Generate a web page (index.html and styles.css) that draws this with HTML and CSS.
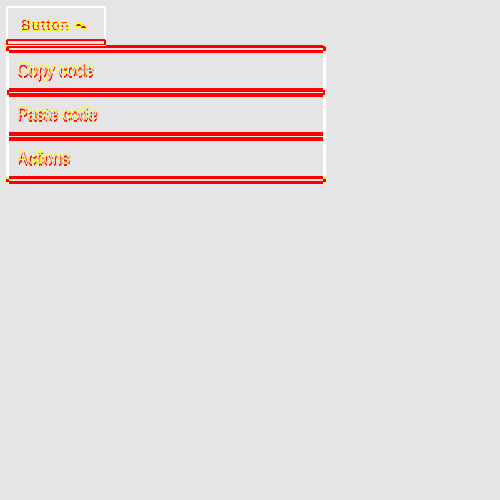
FILE: index.html
```
<!DOCTYPE html>
<html lang="en">
<head>
<meta charset="utf-8">
<title>Button menu</title>
<link rel="stylesheet" href="styles.css">
</head>
<body>
<main class="dropdown">
<button class="toggle"><span class="toggle-label">Button</span><svg class="caret" width="14" height="8" viewBox="0 0 14 8" shape-rendering="crispEdges"><path fill="#ff0" d="M0 4h1V3h1V2h1V1h1V0h3v1h1v1h2v1h1v1h1v1h1v1h1v1H7V6H6V5H0z"/><path fill="#f00" d="M2 4V3h1V2h3v1h1v1zM8 5V4h3v1h1v1H7V5z"/></svg></button>
<ul class="menu">
<li class="item"><span class="label">Copy code</span></li>
<li class="item"><span class="label">Paste code</span></li>
<li class="item"><span class="label">Actions</span></li>
</ul>
</main>
</body>
</html>
```
FILE: styles.css
```
* { box-sizing: border-box; }
body { margin: 0; background: #e5e5e5; font-family: "Liberation Sans", Arial, sans-serif; }
.dropdown { padding: 6px; }
.toggle {
  position: relative; z-index: 1;
  display: flex; align-items: flex-start; width: 100px; height: 40px; margin-bottom: -1px;
  padding: 13px 0 0 15px; border: 0; border-radius: 2px 2px 0 0;
  background:
    linear-gradient(#ff0, #ff0) 0 33px / 1px 1px no-repeat,
    linear-gradient(#ff0, #ff0) 100% 33px / 1px 1px no-repeat,
    linear-gradient(#ff0, #ff0) 100% 39px / 2px 1px no-repeat,
    linear-gradient(#f00, #f00) 0 34px / 2px 4px no-repeat,
    linear-gradient(#f00, #f00) 100% 34px / 2px 4px no-repeat,
    linear-gradient(#f00, #f00) 0 33px / 100% 2px no-repeat,
    linear-gradient(#f00, #f00) 0 38px / 100% 1px no-repeat,
    linear-gradient(#fff, #fff) 0 39px / 100% 1px no-repeat,
    linear-gradient(#fff, #fff) 0 0 / 100% 2px no-repeat,
    linear-gradient(#fff, #fff) 0 0 / 2px 38px no-repeat,
    linear-gradient(#fff, #fff) 100% 0 / 2px 38px no-repeat, #e5e5e5;
}
.toggle-label, .label {
  color: #e5e5e5;
  -webkit-text-stroke: 2px #ff0; paint-order: stroke fill;
  text-shadow: 0 2px #f00, 1px 1px #f00;
  -webkit-mask: conic-gradient(#000 75%, transparent 0) 0 0 / 5px 4px;
  mask: conic-gradient(#000 75%, transparent 0) 0 0 / 5px 4px;
}
.toggle-label {
  flex: none; width: 53px; color: #f00; text-shadow: none;
  font: 14px/12px "Liberation Sans", Arial, sans-serif; letter-spacing: 1.4px; text-align: left;
}
.caret { display: block; flex: none; margin: 3px 0 0; }
.menu {
  width: 320px; height: 139px; margin: 0; padding: 0; list-style: none;
  background: linear-gradient(#fff, #fff) 0 1px / 3px 138px no-repeat,
    linear-gradient(#fff, #fff) 100% 1px / 3px 138px no-repeat;
  display: grid; grid-template-rows: 43px 44px 52px;
}
.item {
  padding: 11px 0 0 11px;
  background: linear-gradient(#f00, #f00) 3px 0 / 314px 4px no-repeat,
    linear-gradient(#f00, #f00) 3px 5px / 314px 4px no-repeat,
    linear-gradient(#f00, #f00) 1px 2px / 2px 5px no-repeat,
    linear-gradient(#f00, #f00) 317px 2px / 2px 5px no-repeat;
}
.item:first-child {
  padding-top: 10px;
  background: linear-gradient(#ff0, #ff0) 0 1px / 1px 1px no-repeat,
    linear-gradient(#ff0, #ff0) 319px 1px / 1px 1px no-repeat,
    linear-gradient(#ff0, #ff0) 0 6px / 1px 1px no-repeat,
    linear-gradient(#ff0, #ff0) 319px 6px / 1px 1px no-repeat,
    linear-gradient(#f00, #f00) 0 1px / 3px 5px no-repeat,
    linear-gradient(#f00, #f00) 317px 1px / 3px 5px no-repeat,
    linear-gradient(#f00, #f00) 3px 0 / 314px 3px no-repeat,
    linear-gradient(#f00, #f00) 3px 5px / 314px 3px no-repeat;
}
.item:last-child {
  background: linear-gradient(#f00, #f00) 3px 0 / 314px 4px no-repeat,
    linear-gradient(#f00, #f00) 3px 5px / 314px 4px no-repeat,
    linear-gradient(#f00, #f00) 3px 44px / 314px 3px no-repeat,
    linear-gradient(#f00, #f00) 3px 49px / 314px 3px no-repeat,
    linear-gradient(#f00, #f00) 0 47px / 3px 3px no-repeat,
    linear-gradient(#f00, #f00) 317px 47px / 3px 3px no-repeat,
    linear-gradient(#ff0, #ff0) 0 45px / 2px 7px no-repeat,
    linear-gradient(#ff0, #ff0) 318px 45px / 2px 7px no-repeat;
}
.label { display: block; width: 100px; font-size: 16px; line-height: 30px; transform: scaleY(1.15); }
```
